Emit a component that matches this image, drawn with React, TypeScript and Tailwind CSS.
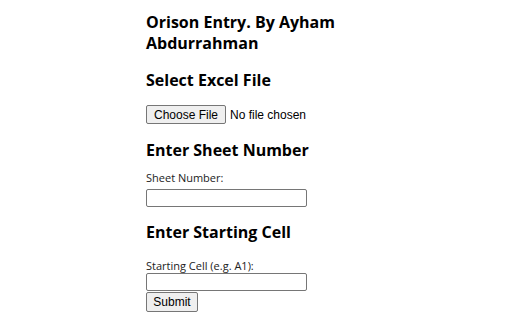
import React from "react";

export default function App() {
  const heading = "font-['Open_Sans',sans-serif] font-bold text-[16px] leading-[21px] text-black";
  const label = "block font-['Open_Sans',sans-serif] text-[11px] leading-[15px] text-[#222]";
  const btn = "bg-[#efefef] border border-[#767676] rounded-[2px] font-['Liberation_Sans',Arial,sans-serif] text-[12px] text-black leading-none";
  return (
    <div className="w-[512px] h-[320px] bg-white overflow-hidden">
      <div className="w-[220px] mx-auto pt-[12px] flex flex-col items-start">
        <h1 className={heading}>Orison Entry. By Ayham Abdurrahman</h1>
        <h2 className={heading + " mt-[16px]"}>Select Excel File</h2>
        <div className="mt-[14px] flex items-center gap-[4px]">
          <button className={btn + " h-[19px] w-[80px]"}>Choose File</button>
          <span className="font-['Liberation_Sans',Arial,sans-serif] text-[12px] text-black">No file chosen</span>
        </div>
        <h2 className={heading + " mt-[16px]"}>Enter Sheet Number</h2>
        <label className={label + " mt-[9px]"}>Sheet Number:</label>
        <input className="mt-[4px] w-[161px] h-[18px] border border-[#767676] rounded-[2px] bg-white" />
        <h2 className={heading + " mt-[15px]"}>Enter Starting Cell</h2>
        <label className={label + " mt-[15px]"}>Starting Cell (e.g. A1):</label>
        <input className="mt-[0px] w-[161px] h-[18px] border border-[#767676] rounded-[2px] bg-white" />
        <button className={btn + " mt-[1px] h-[20px] w-[52px]"}>Submit</button>
      </div>
    </div>
  );
}
